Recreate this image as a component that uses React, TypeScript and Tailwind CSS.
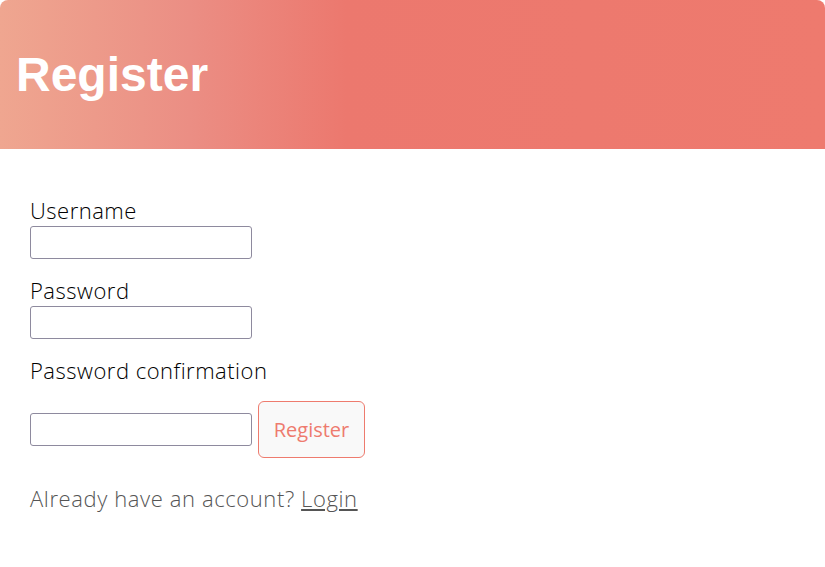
import React from 'react';

const Field: React.FC<{ label: string; type?: string }> = ({ label, type = 'text' }) => (
    <div className="flex flex-col">
        <label className="text-[22px] leading-[28px] pb-[2px] font-light tracking-[0.5px] text-black">{label}</label>
        <input
            type={type}
            className="w-[222px] h-[33px] border border-[#8e8a9e] rounded-[3px] bg-white px-2 outline-none"
        />
    </div>
);

export default function App() {
    return (
        <div className="min-h-[567px] bg-white font-['Open_Sans',sans-serif]">
            <header className="h-[149px] rounded-t-[8px] bg-[linear-gradient(to_right,#efa690_0%,#eb8e84_23%,#ec786e_42%,#ee7a6e_100%)] flex items-center px-4">
                <h1 className="font-['Liberation_Sans',Arial,sans-serif] font-bold text-[48px] text-white">
                    Register
                </h1>
            </header>
            <main className="px-[30px] pt-[47px]">
                <div className="flex flex-col gap-[17px]">
                    <Field label="Username" />
                    <Field label="Password" type="password" />
                    <div className="flex flex-col">
                        <label className="text-[22px] leading-[28px] pb-[2px] font-light tracking-[0.5px] text-black">
                            Password confirmation
                        </label>
                        <div className="flex items-center gap-[6px] mt-[15px]">
                            <input
                                type="password"
                                className="w-[222px] h-[33px] border border-[#8e8a9e] rounded-[3px] bg-white px-2 outline-none"
                            />
                            <button className="w-[107px] h-[57px] border border-[#ee7b6e] rounded-[6px] bg-[#f9f9f9] text-[#ee7b6e] text-[20px]">
                                Register
                            </button>
                        </div>
                    </div>
                </div>
                <p className="mt-[25px] text-[22px] leading-[30px] font-light tracking-[0.6px] text-[#555]">
                    Already have an account? <a className="underline">Login</a>
                </p>
            </main>
        </div>
    );
}
